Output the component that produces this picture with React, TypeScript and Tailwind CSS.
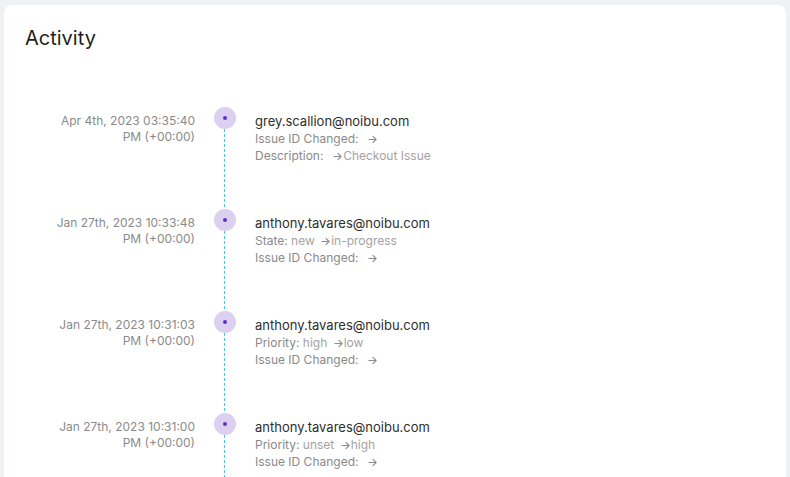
import React from "react";

type Change = { label: string; from: string; to: string };
type Item = { date: string; time: string; user: string; changes: Change[] };

const items: Item[] = [
  {
    date: "Apr 4th, 2023 03:35:40",
    time: "PM (+00:00)",
    user: "grey.scallion@noibu.com",
    changes: [
      { label: "Issue ID Changed:", from: "", to: "" },
      { label: "Description:", from: "", to: "Checkout Issue" },
    ],
  },
  {
    date: "Jan 27th, 2023 10:33:48",
    time: "PM (+00:00)",
    user: "anthony.tavares@noibu.com",
    changes: [
      { label: "State:", from: "new", to: "in-progress" },
      { label: "Issue ID Changed:", from: "", to: "" },
    ],
  },
  {
    date: "Jan 27th, 2023 10:31:03",
    time: "PM (+00:00)",
    user: "anthony.tavares@noibu.com",
    changes: [
      { label: "Priority:", from: "high", to: "low" },
      { label: "Issue ID Changed:", from: "", to: "" },
    ],
  },
  {
    date: "Jan 27th, 2023 10:31:00",
    time: "PM (+00:00)",
    user: "anthony.tavares@noibu.com",
    changes: [
      { label: "Priority:", from: "unset", to: "high" },
      { label: "Issue ID Changed:", from: "", to: "" },
    ],
  },
];

function Arrow() {
  return (
    <svg width="9" height="9" viewBox="0 0 10 10" className="inline-block ml-[3px] mr-[1px]" fill="none" stroke="#8e8e8e" strokeWidth="1.2" strokeLinecap="round" strokeLinejoin="round">
      <path d="M1 5h8M5.5 1.5L9 5L5.5 8.5" />
    </svg>
  );
}

export default function App() {
  return (
    <div className="w-[790px] h-[477px] overflow-hidden bg-[#f0f1f5] pt-[5px] pl-[4px] pr-[4px]" style={{ fontFamily: "Inter, 'Noto Sans', sans-serif" }}>
      <div className="bg-white rounded-lg h-[600px] pl-[21px] pt-[19px]">
        <h2 className="text-[20px] leading-[28px] text-[#1f1f1f] font-normal">Activity</h2>
        <div className="mt-[55px] flex flex-col">
          {items.map((it, i) => (
            <div key={i} className="flex h-[102px]">
              <div className="w-[170px] text-right text-[12px] leading-[16px] text-[#8a8a8a] pt-[6px]">
                <div>{it.date}</div>
                <div>{it.time}</div>
              </div>
              <div className="w-[22px] ml-[19px] flex flex-col">
                <div className="w-[22px] h-[22px] rounded-full bg-[#dcd0f1] flex items-center justify-center shrink-0">
                  <div className="w-[4px] h-[4px] rounded-full bg-[#5b34c4]" />
                </div>
                <div className="flex-1 w-[1px] ml-[10px] bg-[repeating-linear-gradient(to_bottom,#4fc3f7_0px,#4fc3f7_3px,#ffffff_3px,#ffffff_5px)]" />
              </div>
              <div className="ml-[19px] pt-[6px]">
                <div className="text-[13px] leading-[17px] text-[#2e2e2e]">{it.user}</div>
                {it.changes.map((c, j) => (
                  <div key={j} className="text-[12px] leading-[17px] text-[#8a8a8a] whitespace-pre">
                    {c.label} <span className="text-[#a3a3a3]">{c.from}</span> <Arrow />
                    <span className="text-[#a3a3a3]">{c.to}</span>
                  </div>
                ))}
              </div>
            </div>
          ))}
        </div>
      </div>
    </div>
  );
}
